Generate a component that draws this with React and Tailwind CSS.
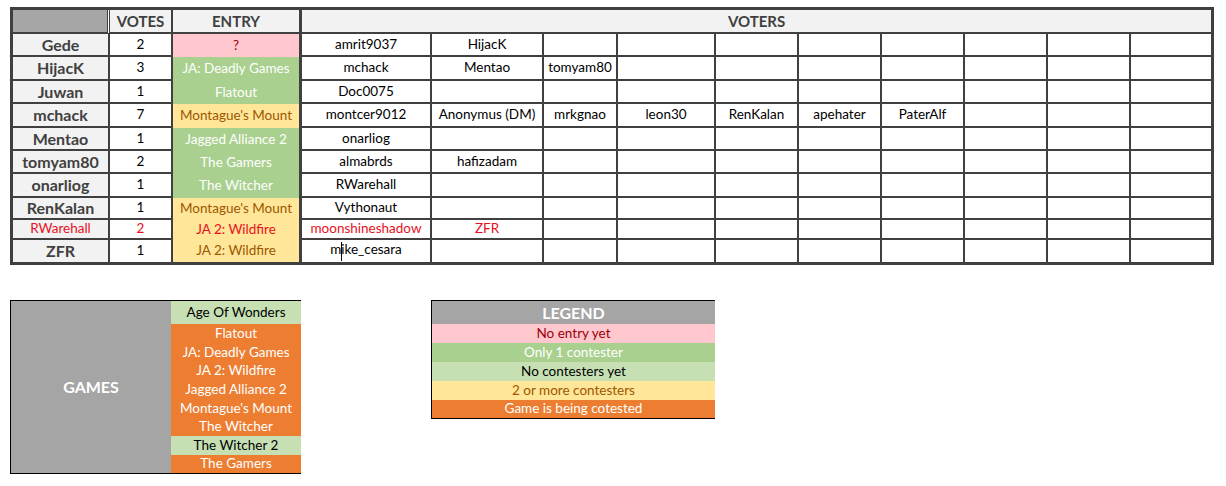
import React from "react";

const F = { fontFamily: "Lato, 'Open Sans', sans-serif" };

const rows = [
  { name: "Gede", h: "h-[23px]", votes: "2", entry: "?", kind: "pink", voters: ["amrit9037", "HijacK"] },
  { name: "HijacK", h: "h-[24px]", votes: "3", entry: "JA: Deadly Games", kind: "green", voters: ["mchack", "Mentao", "tomyam80"] },
  { name: "Juwan", h: "h-[23px]", votes: "1", entry: "Flatout", kind: "green", voters: ["Doc0075"] },
  { name: "mchack", h: "h-[24px]", votes: "7", entry: "Montague's Mount", kind: "yellow", voters: ["montcer9012", "Anonymus (DM)", "mrkgnao", "leon30", "RenKalan", "apehater", "PaterAlf"] },
  { name: "Mentao", h: "h-[23px]", votes: "1", entry: "Jagged Alliance 2", kind: "green", voters: ["onarliog"] },
  { name: "tomyam80", h: "h-[23px]", votes: "2", entry: "The Gamers", kind: "green", voters: ["almabrds", "hafizadam"] },
  { name: "onarliog", h: "h-[24px]", votes: "1", entry: "The Witcher", kind: "green", voters: ["RWarehall"] },
  { name: "RenKalan", h: "h-[22px]", votes: "1", entry: "Montague's Mount", kind: "yellow", voters: ["Vythonaut"] },
  { name: "RWarehall", h: "h-[20px]", votes: "2", entry: "JA 2: Wildfire", kind: "yellowRed", red: true, voters: ["moonshineshadow", "ZFR"] },
  { name: "ZFR", h: "h-[22px]", votes: "1", entry: "JA 2: Wildfire", kind: "yellow", last: true, voters: ["mike_cesara"] },
];

const entryCls = {
  pink: "bg-[#ffc7ce] text-[#9c0006]",
  green: "bg-[#a9d08e] text-white",
  yellow: "bg-[#ffe699] text-[#9c5700]",
  yellowRed: "bg-[#ffe699] text-[#e8101c]",
};

const voterCols = [
  "w-[130px]", "w-[112px]", "w-[74px]", "w-[98px]", "w-[83px]", "w-[83px]", "w-[83px]", "w-[83px]", "w-[83px]", "w-[80px]",
];

function VoterText({ v, red }) {
  if (v === "mike_cesara") {
    return (
      <span>
        m<span className="inline-block w-px h-[19px] bg-black align-middle -mr-px"></span>ike_cesara
      </span>
    );
  }
  return <span className={red ? "text-[#e8101c]" : ""}>{v}</span>;
}

export default function App() {
  return (
    <div className="bg-white w-[1226px] h-[486px] text-black" style={F}>
      <div className="pt-[7px] pl-[10px]">
        <table className="table-fixed border-separate border-spacing-0 border-[3px] border-[#404040] w-[1204px] bg-white">
          <colgroup>
            <col className="w-[97px]" />
            <col className="w-[63px]" />
            <col className="w-[129px]" />
            {voterCols.map((c, i) => (
              <col key={i} className={c} />
            ))}
          </colgroup>
          <tbody>
            <tr className="h-[24px]">
              <td className="p-0 bg-[#a6a6a6] bg-clip-padding border-r-[3px] border-double border-b-2 border-b-solid border-[#404040]"></td>
              <td className="p-0 bg-[#f2f2f2] border-r-2 border-b-2 border-[#404040] text-center font-bold text-[15px] leading-none text-[#404040]">VOTES</td>
              <td className="p-0 bg-[#f2f2f2] border-r-[3px] border-b-2 border-[#404040] text-center font-bold text-[15px] leading-none text-[#404040]">ENTRY</td>
              <td colSpan={10} className="p-0 bg-[#f2f2f2] border-b-2 border-[#404040] text-center font-bold text-[15px] leading-none text-[#404040]">VOTERS</td>
            </tr>
            {rows.map((r, ri) => (
              <tr key={ri} className={r.h}>
                <td
                  className={`p-0 bg-[#f2f2f2] border-r-2 border-[#404040] text-center whitespace-nowrap leading-none ${r.last ? "" : "border-b-2"} ${
                    r.red ? "text-[#e8101c] text-[13.5px] font-normal" : "text-[#404040] text-[16px] font-bold"
                  }`}
                >
                  {r.name}
                </td>
                <td
                  className={`p-0 bg-white border-r-2 border-[#404040] text-center text-[13.5px] leading-none ${r.last ? "" : "border-b-2"} ${
                    r.red ? "text-[#e8101c]" : "text-black"
                  }`}
                >
                  {r.votes}
                </td>
                <td className={`p-0 border-r-[3px] border-[#404040] text-center text-[13.5px] leading-none whitespace-nowrap ${entryCls[r.kind]}`}>
                  {r.entry}
                </td>
                {voterCols.map((c, i) => (
                  <td
                    key={i}
                    className={`p-0 bg-white border-[#404040] text-center text-[13.5px] leading-none whitespace-nowrap overflow-hidden ${
                      i < 9 ? "border-r-2" : ""
                    } ${r.last ? "" : "border-b-2"}`}
                  >
                    {r.voters[i] ? <VoterText v={r.voters[i]} red={r.red} /> : null}
                  </td>
                ))}
              </tr>
            ))}
          </tbody>
        </table>
      </div>

      <div className="flex items-start mt-[35px] pl-[10px]">
        {/* GAMES */}
        <div className="flex w-[291px] border-l border-t border-b border-black text-[13.5px] leading-none">
          <div className="w-[160px] bg-[#a5a5a5] flex items-center justify-center text-white font-bold text-[16px]">GAMES</div>
          <div className="w-[130px] flex flex-col text-center">
            <div className="h-[23px] flex items-center justify-center bg-[#c6e0b4] text-black">Age Of Wonders</div>
            <div className="h-[19px] flex items-center justify-center bg-[#ed7d31] text-white">Flatout</div>
            <div className="h-[19px] flex items-center justify-center bg-[#ed7d31] text-white">JA: Deadly Games</div>
            <div className="h-[18px] flex items-center justify-center bg-[#ed7d31] text-white">JA 2: Wildfire</div>
            <div className="h-[19px] flex items-center justify-center bg-[#ed7d31] text-white">Jagged Alliance 2</div>
            <div className="h-[19px] flex items-center justify-center bg-[#ed7d31] text-white">Montague's Mount</div>
            <div className="h-[18px] flex items-center justify-center bg-[#ed7d31] text-white">The Witcher</div>
            <div className="h-[19px] flex items-center justify-center bg-[#c6e0b4] text-black">The Witcher 2</div>
            <div className="h-[18px] flex items-center justify-center bg-[#ed7d31] text-white">The Gamers</div>
          </div>
        </div>

        {/* LEGEND */}
        <div className="ml-[130px] w-[284px] border-l border-t border-b border-black flex flex-col text-center text-[13.5px] leading-none">
          <div className="h-[23px] flex items-center justify-center bg-[#a5a5a5] text-white font-bold text-[16px]">LEGEND</div>
          <div className="h-[19px] flex items-center justify-center bg-[#ffc7ce] text-[#9c0006]">No entry yet</div>
          <div className="h-[19px] flex items-center justify-center bg-[#a9d08e] text-white">Only 1 contester</div>
          <div className="h-[19px] flex items-center justify-center bg-[#c6e0b4] text-black">No contesters yet</div>
          <div className="h-[19px] flex items-center justify-center bg-[#ffe699] text-[#9c5700]">2 or more contesters</div>
          <div className="h-[18px] flex items-center justify-center bg-[#ed7d31] text-white">Game is being cotested</div>
        </div>
      </div>
    </div>
  );
}
